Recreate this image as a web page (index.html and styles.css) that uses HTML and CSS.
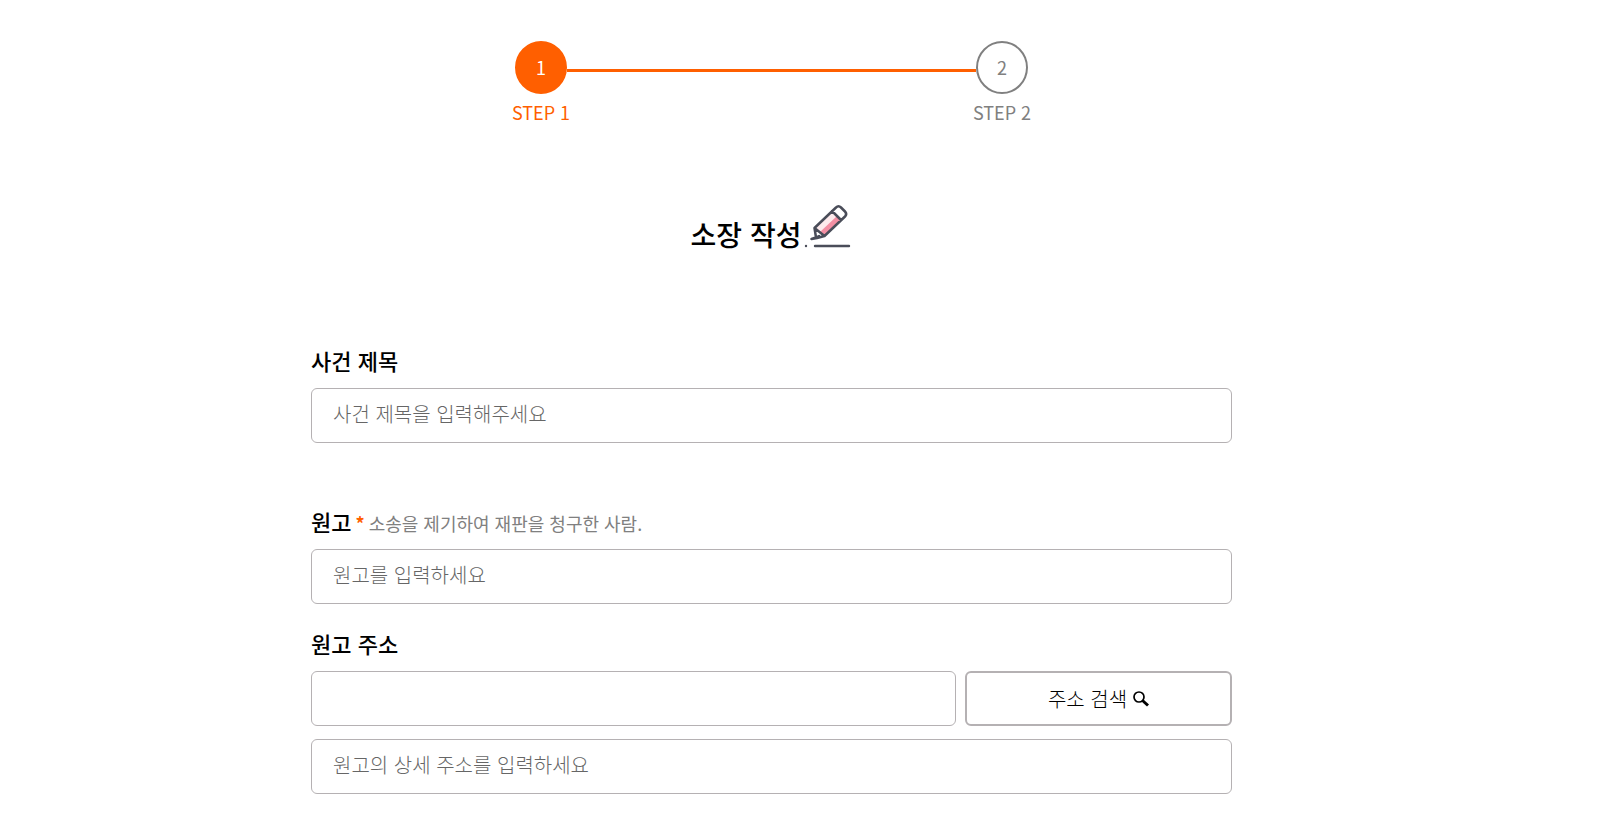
FILE: index.html
```html
<!DOCTYPE html>
<html lang="ko">
<head>
<meta charset="utf-8">
<title>소장 작성</title>
<link rel="stylesheet" href="styles.css">
</head>
<body>
<main class="page">
  <ol class="steps">
    <li class="step step-active"><span class="step-circle">1</span><span class="step-label">STEP 1</span></li>
    <li class="step-line" aria-hidden="true"></li>
    <li class="step"><span class="step-circle">2</span><span class="step-label">STEP 2</span></li>
  </ol>
  <h1 class="title">소장 작성
    <svg class="pencil" viewBox="0 0 48 46" fill="none" aria-hidden="true">
      <path d="M11 24 28 8l9 9-17 16z" fill="#fdeaec"/>
      <path d="m16 29 17-16 4 4-17 16z" fill="#f38fa3"/>
      <path d="M10.500 25 32 4.500q2.500-2.500 5 0L41 8.500q2.500 2.500 0 5L20.500 33 13 35l-5.500 1 4.500-1.500zM28 8l9 9M10.500 25l10 8M12 34.500l3-1.500" stroke="#4a4d59" stroke-width="2.500" stroke-linejoin="round" stroke-linecap="round"/>
      <path d="M11 43h34" stroke="#4a4d59" stroke-width="2.400" stroke-linecap="round"/>
      <circle cx="2" cy="43" r="1.200" fill="#4a4d59"/>
    </svg>
  </h1>
  <form class="form">
    <div class="field field-case">
      <div class="field-head"><label for="case-title">사건 제목</label></div>
      <input id="case-title" class="input" type="text" placeholder="사건 제목을 입력해주세요">
    </div>
    <div class="field field-plaintiff">
      <div class="field-head"><label for="plaintiff">원고</label><span class="required">*</span><span class="hint">소송을 제기하여 재판을 청구한 사람.</span></div>
      <input id="plaintiff" class="input" type="text" placeholder="원고를 입력하세요">
    </div>
    <div class="field">
      <div class="field-head"><label for="address">원고 주소</label></div>
      <div class="address-row">
        <input id="address" class="input" type="text">
        <button class="search" type="button">주소 검색
          <svg class="lens" viewBox="0 0 16 16" fill="none" stroke="#000" aria-hidden="true"><circle cx="6" cy="6" r="5" stroke-width="1.700"/><path d="m9.500 9.500 5.500 5" stroke-width="3"/></svg>
        </button>
      </div>
      <input class="input" type="text" aria-label="원고 상세 주소" placeholder="원고의 상세 주소를 입력하세요">
    </div>
  </form>
</main>
</body>
</html>
```
FILE: styles.css
```css
* { box-sizing: border-box; }
body {
  margin: 0;
  background: #fff;
  color: #000;
  font-family: "Noto Sans CJK KR", sans-serif;
}
.page {
  padding: 41px 60px 28px 0;
}
.steps {
  display: flex;
  justify-content: center;
  margin: 0;
  padding: 0;
  list-style: none;
}
.step {
  display: flex;
  flex-direction: column;
  align-items: center;
  width: 52px;
  color: #808080;
  font-size: 18px;
  line-height: 26px;
}
.step-circle {
  display: grid;
  place-items: center;
  width: 52px;
  height: 53px;
  padding-bottom: 2px;
  border: 2px solid #808080;
  border-radius: 50%;
}
.step-label {
  margin-top: 5px;
  white-space: nowrap;
}
.step-active { color: #ff5f00; }
.step-active .step-circle {
  border-color: #ff5f00;
  background: #ff5f00;
  color: #fff;
}
.step-line {
  width: 28%;
  max-width: 409px;
  height: 3px;
  margin-top: 28px;
  background: #ff5f00;
}
.title {
  display: flex;
  justify-content: center;
  align-items: flex-end;
  gap: 3px;
  margin: 78px 0 0;
  font-size: 28px;
  font-weight: 500;
  line-height: 40px;
}
.pencil {
  width: 48px;
  height: 46px;
  margin-bottom: 5px;
}
.form {
  width: 60%;
  max-width: 921px;
  margin: 90px auto 0;
}
.field-head {
  display: flex;
  align-items: baseline;
  gap: 4px;
  margin-bottom: 12px;
  font-size: 22px;
  font-weight: 500;
  line-height: 32px;
}
.field-case { margin-bottom: 62px; }
.field-plaintiff { margin-bottom: 23px; }
.required {
  color: #ff5f00;
  font-size: 18px;
  font-weight: 700;
  line-height: 24px;
}
.hint {
  color: #808080;
  font-size: 18px;
  font-weight: 400;
  line-height: 24px;
}
.input {
  display: block;
  width: 100%;
  height: 55px;
  padding: 0 21px 4px;
  border: 1px solid #b5b1b3;
  border-radius: 6px;
  background: #fff;
  font-family: inherit;
  font-size: 20px;
  font-weight: 300;
}
.input::placeholder { color: #666; }
.address-row {
  display: grid;
  grid-template-columns: 645fr 267fr;
  gap: 9px;
  margin-bottom: 13px;
}
.search {
  display: flex;
  align-items: center;
  justify-content: center;
  gap: 6px;
  border: 2px solid #b5b1b3;
  border-radius: 6px;
  background: #fff;
  color: #000;
  font-family: inherit;
  font-size: 20px;
  font-weight: 300;
}
.lens {
  width: 16px;
  height: 16px;
}
```
